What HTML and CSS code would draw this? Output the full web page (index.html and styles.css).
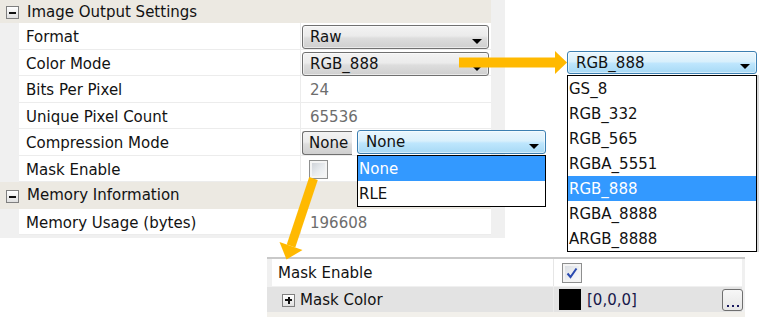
FILE: index.html
```html
<!DOCTYPE html>
<html lang="en">
<head>
<meta charset="utf-8">
<title>Image Output Settings</title>
<link rel="stylesheet" href="styles.css">
</head>
<body>
<div class="canvas">
  <div class="grid">
    <div class="grid-main">
      <div class="cat cat-first"><span class="pm"></span><span class="cat-label">Image Output Settings</span></div>
      <div class="prow"><div class="pname">Format</div><div class="pval"><div class="combo combo-gray"><span>Raw</span><i class="tri"></i></div></div></div>
      <div class="prow"><div class="pname">Color Mode</div><div class="pval"><div class="combo combo-gray"><span>RGB_888</span><i class="tri"></i></div></div></div>
      <div class="prow"><div class="pname">Bits Per Pixel</div><div class="pval ro">24</div></div>
      <div class="prow"><div class="pname">Unique Pixel Count</div><div class="pval ro">65536</div></div>
      <div class="prow"><div class="pname">Compression Mode</div><div class="pval"><div class="btn-stub">None</div></div></div>
      <div class="prow"><div class="pname">Mask Enable</div><div class="pval"><span class="chk"></span></div></div>
      <div class="cat"><span class="pm"></span><span class="cat-label">Memory Information</span></div>
      <div class="prow"><div class="pname">Memory Usage (bytes)</div><div class="pval ro">196608</div></div>
    </div>
    <div class="grid-strip"></div>
  </div>

  <div class="dropdown dd-compression">
    <div class="combo combo-blue"><span>None</span><i class="tri"></i></div>
    <ul class="dd-list">
      <li class="sel">None</li>
      <li>RLE</li>
    </ul>
  </div>

  <div class="dropdown dd-color">
    <div class="combo combo-blue"><span>RGB_888</span><i class="tri"></i></div>
    <ul class="dd-list">
      <li>GS_8</li>
      <li>RGB_332</li>
      <li>RGB_565</li>
      <li>RGBA_5551</li>
      <li class="sel">RGB_888</li>
      <li>RGBA_8888</li>
      <li>ARGB_8888</li>
    </ul>
  </div>

  <div class="panel">
    <div class="pe-row pe-row1">
      <div class="pe-name">Mask Enable</div>
      <div class="pe-val">
        <span class="chk chk-on"><svg width="14" height="14" viewBox="0 0 14 14"><path d="M2.5 7.5 L5.5 11 L11.5 2.5" fill="none" stroke="#2a4ab0" stroke-width="2"/></svg></span>
      </div>
    </div>
    <div class="pe-row pe-row2">
      <div class="pe-name2"><span class="pm pm-plus"></span><span class="pe-label">Mask Color</span></div>
      <div class="pe-val2">
        <span class="swatch"></span>
        <span class="color-text">[0,0,0]</span>
        <span class="ellipsis"><i></i><i></i><i></i></span>
      </div>
    </div>
  </div>

  <svg class="arrows" width="762" height="317" viewBox="0 0 762 317">
    <rect x="459" y="57.5" width="97" height="10" fill="#ffb900"/>
    <polygon points="555,51 567,62.5 555,74" fill="#ffb900"/>
    <line x1="313.5" y1="178.5" x2="291" y2="246" stroke="#ffb900" stroke-width="9"/>
    <polygon points="279.5,242 302.5,250 286.5,259.5" fill="#ffb900"/>
  </svg>
</div>
</body>
</html>
```

FILE: styles.css
```css
* { box-sizing: border-box; }
html, body { margin: 0; padding: 0; background: #fff; }
body {
  font-family: "DejaVu Sans", Verdana, sans-serif;
  font-size: 15px;
  line-height: 1.15;
  color: #121212;
}
.canvas { position: relative; width: 762px; height: 317px; overflow: hidden; }

/* main property grid */
.grid { display: flex; width: 505px; height: 238px; padding-bottom: 3px; background: #f0f0f0; }
.grid-main { width: 491px; display: flex; flex-direction: column; }
.grid-strip { flex: 1; }

.cat { flex: none; height: 26.5px; display: flex; align-items: center; background: #ece9e2; padding: 1.5px 0 0 6px; }
.cat-first { height: 23px; }
.cat-label { margin-left: 8px; white-space: nowrap; }

.pm {
  flex: none; width: 13px; height: 13px; margin-top: 1px;
  border: 1px solid #7f7f7f;
  background: linear-gradient(#ffffff, #e0e0e0);
  display: flex; align-items: center; justify-content: center;
  position: relative;
}
.pm::before { content: ""; width: 7px; height: 2px; background: #111; }
.pm-plus::after { content: ""; position: absolute; left: 4.5px; top: 2px; width: 2px; height: 7px; background: #111; }

.prow { flex: none; height: 26.5px; display: flex; }
.pname {
  width: 281px; margin-left: 19px; background: #fff;
  border-bottom: 1px solid #ececec;
  padding: 4px 0 0 7px;
  display: flex; align-items: center; white-space: nowrap;
}
.pval {
  flex: 1; background: #fff;
  border-left: 1px solid #ececec; border-bottom: 1px solid #ececec;
  display: flex; align-items: flex-start; padding: 2px 0 0 1px;
}
.pval.ro { align-items: center; padding: 4px 0 0 9px; color: #6d6d6d; }

/* combobox */
.combo {
  flex: none; width: 187px; height: 24px;
  display: flex; align-items: center; justify-content: space-between;
  border: 1px solid #707070; border-radius: 3px;
  padding: 1.5px 6px 0 7px; white-space: nowrap;
}
.combo-gray { background: linear-gradient(#f3f3f3, #ebebeb 45%, #dddddd 55%, #cfcfcf); box-shadow: inset 0 0 0 1px rgba(255,255,255,.55); }
.combo-blue { border-color: #3c7fb1; background: linear-gradient(#eaf6fd, #d9f0fc 45%, #bee6fd 55%, #a7d9f5); box-shadow: inset 0 0 0 1px rgba(255,255,255,.5); }
.tri {
  width: 0; height: 0; align-self: flex-end; margin-bottom: 4px;
  border-left: 5px solid transparent; border-right: 5px solid transparent; border-top: 5px solid #000;
}

.btn-stub {
  flex: none; width: 50px; height: 24px;
  border: 1px solid #707070; border-right: none; border-radius: 3px 0 0 3px;
  background: linear-gradient(#f3f3f3, #ebebeb 45%, #dddddd 55%, #cfcfcf);
  padding: 1.5px 0 0 6px; display: flex; align-items: center; overflow: hidden; white-space: nowrap;
}

.chk {
  flex: none; width: 19px; height: 19px; margin: 2.5px 0 0 7px;
  border: 1px solid #8e8f8f;
  background: linear-gradient(135deg, #c9cdd3, #e9ecef 55%, #fafafa);
  box-shadow: inset 0 0 0 2px #f4f4f4;
  display: flex; align-items: center; justify-content: center;
}

/* drop-down popups */
.dropdown { position: absolute; display: flex; flex-direction: column; }
.dd-compression { left: 357px; top: 130px; width: 189px; }
.dd-color { left: 567px; top: 51px; width: 190px; }
.dropdown .combo { width: auto; padding-left: 8px; }
.dd-color .combo { height: 23px; }
.dd-list { list-style: none; margin: 1px 0 0; padding: 0; border: 1px solid #000; background: #fff; }
.dd-color .dd-list { box-shadow: 2px 0 0 #d8d8d8; }
.dd-list li { height: 25px; display: flex; align-items: center; padding: 2px 0 0 1px; white-space: nowrap; }
.dd-list li.sel { background: #3399ff; color: #fff; }

/* detail panel */
.panel {
  position: absolute; left: 267px; top: 257px; width: 478px; height: 60px;
  background: #f2f0eb; border-top: 2px solid #c9c9c9;
  display: flex; flex-direction: column;
}
.pe-row { flex: none; display: flex; }
.pe-row1 { height: 27px; background: #f0f0f0; padding: 0 3px 0 5px; }
.pe-name { width: 281px; background: #fff; display: flex; align-items: center; padding: 2px 0 0 6px; white-space: nowrap; }
.pe-val { flex: 1; background: #fff; border-left: 1px solid #e6e6e6; display: flex; align-items: center; padding-left: 8px; }
.chk-on { margin: 0; width: 20px; height: 20px; background: linear-gradient(135deg, #d6dae0, #f0f2f4 60%, #fbfbfb); }
.pe-row2 { height: 26px; background: #e3e3e3; border-top: 1px solid #f0f0f0; border-right: 3px solid #f0f0f0; }
.pe-name2 { width: 286px; display: flex; align-items: center; padding-left: 15px; white-space: nowrap; }
.pe-name2 .pm { margin-top: 1px; }
.pe-label { margin-left: 5px; padding-top: 2px; }
.pe-val2 { flex: 1; display: flex; align-items: center; padding-left: 5px; border-left: 1px solid #ececec; }
.swatch { flex: none; width: 22px; height: 21px; background: #000; }
.color-text { margin-left: 6px; padding-top: 2px; color: #17174a; }
.ellipsis {
  margin-left: auto; margin-right: -1px; width: 21px; height: 22px;
  border: 1px solid #6f6f6f; border-radius: 3px;
  background: linear-gradient(#f7f7f7, #e6e6e6);
  display: flex; justify-content: center; align-items: flex-end; gap: 3px; padding-bottom: 3px;
}
.ellipsis i { width: 2px; height: 2px; background: #1a1a60; }

.arrows { position: absolute; left: 0; top: 0; pointer-events: none; }
```
